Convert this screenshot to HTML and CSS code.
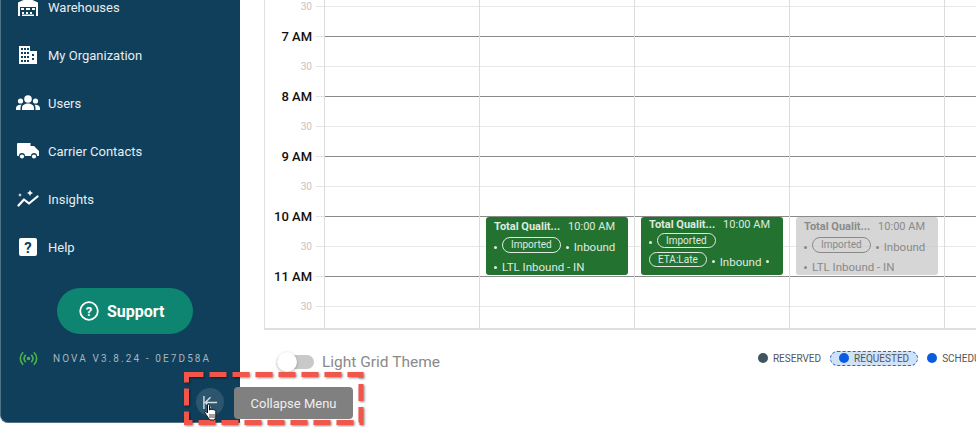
FILE: index.html
```html
<!DOCTYPE html>
<html lang="en">
<head>
<meta charset="utf-8">
<title>Nova Yard Schedule</title>
<link rel="stylesheet" href="styles.css">
</head>
<body>
<div class="app">
  <aside class="sidebar">
    <nav class="nav">
      <a class="nav-item"><svg class="nav-icon" viewBox="0 0 20 18"><path fill="#fff" d="M0 4.500 10 0l10 4.500V18h-2V9H2v9H0z"/><path fill="#fff" d="M3 5h14v3H3z"/><path fill="#fff" d="M3 10h3v2H3zM8 10h4v2H8zM14 10h3v2h-3zM4 14h2v2H4zM8 14h2v2H8zM12 14h2v2h-2zM4 16.500h12v1.500H4z"/></svg><span>Warehouses</span></a>
      <a class="nav-item"><svg class="nav-icon" viewBox="0 0 20 18"><path fill="#fff" d="M1 0h11v5h7v13H1z"/><path fill="#0f3f5a" d="M3 2h2v2H3zM6 2h2v2H6zM9 2h2v2H9zM3 6h2v2H3zM6 6h2v2H6zM9 6h2v2H9zM3 10h2v2H3zM6 10h2v2H6zM9 10h2v2H9zM3 14h2v2H3zM6 14h2v2H6zM9 14h2v2H9zM14 8h2v2h-2zM14 12h2v2h-2z"/></svg><span>My Organization</span></a>
      <a class="nav-item"><svg class="nav-icon wide" viewBox="0 0 24 16"><g fill="#fff"><circle cx="12" cy="4" r="3.800"/><circle cx="4.500" cy="6" r="2.600"/><circle cx="19.500" cy="6" r="2.600"/><path d="M6 15v-2c0-3 3-4.500 6-4.500s6 1.500 6 4.500v2zM0 15v-1.500C0 11 2 9.800 4.500 9.800c.5 0 .8 0 1 .1-1 .9-1 2-1 5.100zM24 15v-1.500c0-2.500-2-3.700-4.500-3.700-.5 0-.8 0-1 .1 1 .9 1 2 1 5.100z"/></g></svg><span>Users</span></a>
      <a class="nav-item"><svg class="nav-icon mid" viewBox="0 0 22 16"><path fill="#fff" d="M1 0h12.500v3H17l5 5v5h-2a3 3 0 0 0-6 0H8a3 3 0 0 0-6 0H1a1 1 0 0 1-1-1V1a1 1 0 0 1 1-1z"/><circle cx="5" cy="13.500" r="2.100" fill="#fff"/><circle cx="17" cy="13.500" r="2.100" fill="#fff"/></svg><span>Carrier Contacts</span></a>
      <a class="nav-item"><svg class="nav-icon mid" viewBox="0 0 22 18"><path fill="none" stroke="#fff" stroke-width="2.200" stroke-linecap="round" stroke-linejoin="round" d="M1.500 15.500 7 9.500l5 4 8.500-7"/><path fill="#fff" d="M13 0l1 2 2 1-2 1-1 2-1-2-2-1 2-1zM3 3l.6 1.400L5 5l-1.400.6L3 7l-.6-1.400L1 5l1.400-.6z"/></svg><span>Insights</span></a>
      <a class="nav-item"><svg class="nav-icon narrow" viewBox="0 0 18 18"><rect width="18" height="18" rx="2" fill="#fff"/><text x="9" y="14.500" text-anchor="middle" class="help-mark">?</text></svg><span>Help</span></a>
    </nav>
    <a class="support"><svg class="support-icon" viewBox="0 0 20 20"><circle cx="10" cy="10" r="8.800" fill="none" stroke="#fff" stroke-width="1.800"/><text x="10" y="14.500" text-anchor="middle" class="support-mark">?</text></svg><span>Support</span></a>
    <div class="version">
      <svg class="signal" viewBox="0 0 20 14"><g fill="none" stroke="#4caf50" stroke-width="1.600" stroke-linecap="round"><path d="M4.500 1.500C1.500 4.500 1.500 9.500 4.500 12.500M15.500 1.500c3 3 3 8 0 11M7 4c-1.500 1.800-1.500 4.200 0 6M13 4c1.500 1.800 1.500 4.200 0 6"/></g><circle cx="10" cy="7" r="1.700" fill="#4caf50"/></svg>
      <span>NOVA V3.8.24 - 0E7D58A</span>
    </div>
  </aside>

  <main class="main">
    <section class="grid">
      <div class="row half"><span class="label">30</span><span class="tick"></span><span class="line"></span></div>
      <div class="row hour"><span class="label">7 AM</span><span class="tick"></span><span class="line"></span></div>
      <div class="row half"><span class="label">30</span><span class="tick"></span><span class="line"></span></div>
      <div class="row hour"><span class="label">8 AM</span><span class="tick"></span><span class="line"></span></div>
      <div class="row half"><span class="label">30</span><span class="tick"></span><span class="line"></span></div>
      <div class="row hour"><span class="label">9 AM</span><span class="tick"></span><span class="line"></span></div>
      <div class="row half"><span class="label">30</span><span class="tick"></span><span class="line"></span></div>
      <div class="row hour"><span class="label">10 AM</span><span class="tick"></span><span class="line"></span></div>
      <div class="row half"><span class="label">30</span><span class="tick"></span><span class="line"></span></div>
      <div class="row hour"><span class="label">11 AM</span><span class="tick"></span><span class="line"></span></div>
      <div class="row half"><span class="label">30</span><span class="tick"></span><span class="line"></span></div>
      <div class="columns">
        <div class="col"></div>
        <div class="col">
          <div class="event">
            <div class="ev-head"><b>Total Qualit...</b><span>10:00 AM</span></div>
            <div class="ev-line"><i class="dot"></i><span class="tag">Imported</span><i class="dot"></i><span>Inbound</span></div>
            <div class="ev-line"><i class="dot"></i><span>LTL Inbound - IN</span></div>
          </div>
        </div>
        <div class="col">
          <div class="event tight">
            <div class="ev-head"><b>Total Qualit...</b><span>10:00 AM</span></div>
            <div class="ev-line"><i class="dot"></i><span class="tag">Imported</span></div>
            <div class="ev-line"><span class="tag">ETA:Late</span><i class="dot"></i><span>Inbound</span><i class="dot"></i></div>
          </div>
        </div>
        <div class="col">
          <div class="event muted">
            <div class="ev-head"><b>Total Qualit...</b><span>10:00 AM</span></div>
            <div class="ev-line"><i class="dot"></i><span class="tag">Imported</span><i class="dot"></i><span>Inbound</span></div>
            <div class="ev-line"><i class="dot"></i><span>LTL Inbound - IN</span></div>
          </div>
        </div>
        <div class="col"></div>
      </div>
    </section>
    <div class="footer">
      <div class="theme-toggle"><span class="switch"><span class="knob"></span></span><span>Light Grid Theme</span></div>
      <div class="legend">
        <span class="legend-item"><i class="swatch reserved"></i>RESERVED</span>
        <span class="legend-item active"><i class="swatch blue"></i>REQUESTED</span>
        <span class="legend-item"><i class="swatch blue"></i>SCHEDULED</span>
      </div>
    </div>
  </main>
</div>

<div class="callout">
  <svg class="callout-frame" viewBox="0 0 180 53"><rect x="2.500" y="2.500" width="174.500" height="48" fill="none" stroke="#f2564a" stroke-width="5" stroke-dasharray="17 6"/></svg>
  <span class="collapse-btn"><svg class="collapse-icon" viewBox="0 0 16 16"><path fill="none" stroke="#d5dde2" stroke-width="1.500" d="M1 1v14M15 8H2.500M8 2.500 2.500 8 8 13.500"/></svg></span>
  <span class="tooltip">Collapse Menu</span>
</div>
<svg class="pointer" viewBox="0 0 14 18"><path fill="#fff" stroke="#111" stroke-width="1" stroke-linejoin="round" d="M3.500 1.500c1-.8 2 0 2 1V7h.5c.5-1 1.500-1 2 0 .6-.8 1.500-.8 2 .2.700-.6 1.800-.2 1.800 1V13c0 2-1 3.500-2 4H6c-1-1-2-2.500-3-4L1 10c-.6-1 .5-2 1.500-1.200L3.500 10z"/><path stroke="#111" stroke-width=".8" d="M6 11v4M8 11v4M10 11v4"/></svg>
</body>
</html>
```

FILE: styles.css
```css
* { box-sizing: border-box; }
html, body { margin: 0; height: 100%; overflow: hidden; background: #fff; }
body { font-family: Roboto, "Liberation Sans", sans-serif; width: 976px; height: 427px; position: relative; }

.app { display: flex; height: 427px; align-items: flex-start; }

.sidebar {
  width: 240px;
  height: 423px;
  flex: none;
  background: #0f3f5a;
  border-left: 1px solid #4f7284;
  border-bottom: 1px solid #4f7284;
  border-bottom-left-radius: 8px;
  display: flex;
  flex-direction: column;
}
.nav { margin-top: -17px; display: flex; flex-direction: column; }
.nav-item {
  height: 48px;
  display: flex;
  align-items: center;
  gap: 10px;
  padding-left: 17px;
  color: #e6edf1;
  font-size: 13px;
}
.nav-icon { width: 20px; height: 18px; flex: none; }
.nav-icon.wide { width: 24px; margin: 0 -2px; }
.nav-icon.mid { width: 22px; margin: 0 -1px; }
.nav-icon.narrow { width: 18px; margin: 0 1px; }
.help-mark { font: 700 15px Roboto, sans-serif; fill: #0f3f5a; }
.support {
  align-self: flex-start;
  margin: 17px 0 0 56px;
  width: 136px;
  height: 46px;
  border-radius: 23px;
  background: #0e8570;
  color: #fff;
  font-weight: 700;
  font-size: 16px;
  display: flex;
  align-items: center;
  gap: 8px;
  padding-left: 22px;
}
.support-icon { width: 20px; height: 20px; flex: none; }
.support-mark { font: 700 13px Roboto, sans-serif; fill: #fff; }
.version {
  margin-top: 15px;
  padding-left: 17px;
  height: 18px;
  display: flex;
  align-items: center;
  gap: 14px;
  font-size: 10px;
  letter-spacing: 2.100px;
  color: #a6b5bf;
  white-space: nowrap;
}
.signal { width: 21px; height: 15px; flex: none; }

.main { flex: 1; min-width: 0; padding-left: 24px; overflow: hidden; height: 427px; }

.grid {
  position: relative;
  margin-top: -24px;
  height: 354px;
  width: 760px;
  border-left: 1px solid #e0e0e0;
  border-bottom: 2px solid #e0e0e0;
  overflow: hidden;
}
.row { height: 30px; display: flex; align-items: flex-start; }
.label {
  width: 47px;
  text-align: right;
  font-size: 10px;
  line-height: 12px;
  margin-top: 25px;
  color: #c4c4c4;
  flex: none;
}
.tick { width: 8px; margin: 30px 0 0 4px; height: 0; flex: none; border-top: 1px solid #e4e4e4; }
.line { flex: 1; height: 0; margin-top: 30px; border-top: 1px solid #e8e8e8; }
.hour .label { color: #111; font-size: 13px; font-weight: 500; line-height: 14px; margin-top: 24px; }
.hour .line { border-top-color: #8a8a8a; }

.columns { position: absolute; left: 59px; top: 0; bottom: 0; display: flex; }
.col { width: 155px; flex: none; border-left: 1px solid #dcdcdc; position: relative; }

.event {
  position: absolute;
  left: 6px;
  top: 241px;
  width: 142px;
  height: 58px;
  border-radius: 3px;
  background: #24722f;
  color: #dfeae0;
  font-size: 11.500px;
  padding: 2px 8px 0;
  overflow: hidden;
}
.event.muted { background: rgba(200, 200, 200, .75); color: #8a8a8a; }
.ev-head { display: flex; gap: 8px; height: 18px; line-height: 16px; font-size: 11px; white-space: nowrap; }
.ev-head b { font-weight: 700; }
.tight .ev-head { margin-top: -2px; height: 16px; }
.ev-line { display: flex; align-items: center; gap: 5px; height: 20px; white-space: nowrap; }
.tight .ev-line { height: 19px; }
.dot { width: 3px; height: 3px; background: currentColor; border-radius: 50%; flex: none; }
.tag {
  height: 16px;
  line-height: 14px;
  padding: 0 8px;
  font-size: 10px;
  border: 1px solid currentColor;
  border-radius: 8px;
  margin-bottom: 5px;
}
.tight .tag { height: 15px; line-height: 13px; }

.footer { height: 49px; display: flex; align-items: flex-start; width: 760px; }
.theme-toggle { display: flex; align-items: center; gap: 8px; margin: 23px 0 0 13px; font-size: 15.500px; color: #8a8a8a; white-space: nowrap; }
.switch { width: 37px; height: 14px; border-radius: 7px; background: #c9c9c9; position: relative; display: block; }
.knob { position: absolute; left: 0; top: -3px; width: 20px; height: 20px; border-radius: 50%; background: #fff; box-shadow: 0 1px 3px rgba(0,0,0,.3); }
.legend { display: flex; align-items: center; gap: 9px; margin: 21px 0 0 318px; font-size: 10px; color: #555; white-space: nowrap; }
.legend-item { display: flex; align-items: center; gap: 5px; height: 15px; }
.legend-item.active { background: #cfe2f8; border: 1px dashed #2b62e0; border-radius: 8px; padding: 0 8px; }
.swatch { width: 10px; height: 10px; border-radius: 50%; display: block; margin-top: -2px; }
.reserved { background: #3d5561; }
.blue { background: #0b5be0; }

.callout { position: absolute; left: 184px; top: 372px; width: 180px; height: 53px; }
.callout-frame { position: absolute; inset: 0; width: 180px; height: 53px; filter: drop-shadow(1px 1px 1px rgba(0,0,0,.45)); }
.collapse-btn { position: absolute; left: 12px; top: 16px; width: 28px; height: 28px; border-radius: 50%; background: #2c566e; display: flex; align-items: center; justify-content: center; }
.collapse-icon { width: 15px; height: 15px; }
.tooltip { position: absolute; left: 50px; top: 15px; width: 119px; height: 32px; border-radius: 4px; background: #808080; color: #eee; font-size: 13px; display: flex; align-items: center; justify-content: center; }
.pointer { position: absolute; left: 204px; top: 403px; width: 14px; height: 18px; }
```
